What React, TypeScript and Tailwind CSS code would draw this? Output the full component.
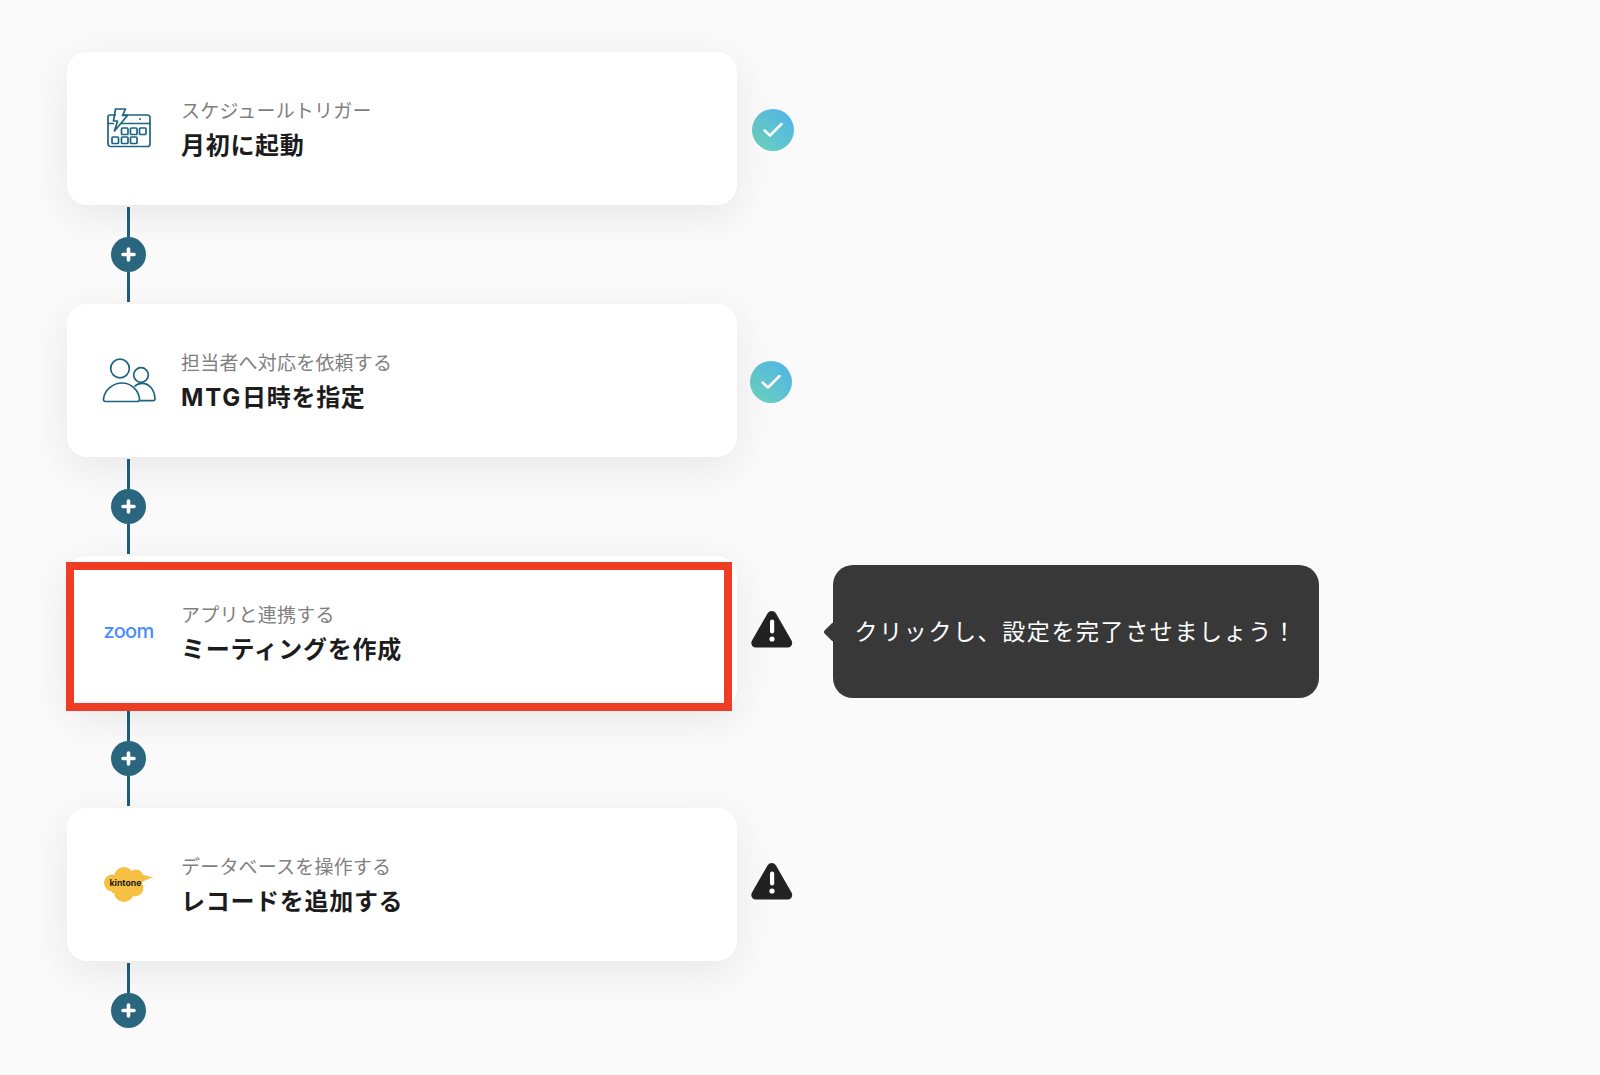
const font = "font-['Inter','Noto_Sans_CJK_JP',sans-serif]";

function CalendarIcon() {
  return (
    <svg className="mb-[2px]" width="44" height="40" viewBox="0 0 44 40" fill="none" stroke="#1d6482" strokeWidth="1.7" strokeLinejoin="round">
      <path d="M9 7H3a2 2 0 0 0-2 2v27a2.500 2.500 0 0 0 2.500 2.500h37a2.500 2.500 0 0 0 2.500-2.500V9.500a2.500 2.500 0 0 0-2.500-2.500H16.500" />
      <path d="M1 15.500h6M14 15.500h29" />
      <path d="M8.500 1H18.500L15.500 7.500H20.500L7.500 23L10.500 13H6.500Z" />
      <circle cx="33" cy="11" r="1" fill="#1d6482" stroke="none" />
      {[14.5, 23.5, 32.5].map((x) => (
        <rect key={x} x={x} y="20" width="6.5" height="6.5" rx="1" />
      ))}
      {[5, 14.5, 23.5].map((x) => (
        <rect key={x} x={x} y="29" width="6.5" height="6.5" rx="1" />
      ))}
    </svg>
  );
}

function PeopleIcon() {
  return (
    <svg width="54" height="45" viewBox="0 0 54 45" fill="none" stroke="#1d6482" strokeWidth="1.7" strokeLinejoin="round">
      <circle cx="18" cy="10.5" r="9.3" />
      <circle cx="39" cy="17" r="7.3" />
      <path d="M3.500 43.500h31.500c1.800 0 2.700-1 2.500-2.600C36.500 32 29 25 20 25S2.500 32 1.500 40.900c-.2 1.600.5 2.600 2 2.600Z" />
      <path d="M32.500 28.500c2-2 4.500-3.200 7.500-3.200 7 0 12.500 6 13 15.300.1 1.200-.6 2-1.800 2H37.500" />
    </svg>
  );
}

function KintoneIcon() {
  return (
    <svg width="50" height="35" viewBox="0 0 50 35" fill="#f6c143">
      <circle cx="20" cy="10" r="10" />
      <circle cx="32" cy="10" r="7.500" />
      <circle cx="8.500" cy="16" r="8.500" />
      <circle cx="20" cy="25" r="10" />
      <circle cx="31" cy="21" r="8.500" />
      <rect x="8" y="8" width="28" height="18" />
      <path d="M34 6.500Q44 9 50 10.500Q42 11.500 36 17Z" />
      <text x="5.500" y="19" fontFamily="Inter, sans-serif" fontSize="8.700" fontWeight="700" fill="#1a1a1a">
        kintone
      </text>
    </svg>
  );
}

function ZoomLogo() {
  return <span className="mb-[3px] font-['Inter',sans-serif] text-[20px] leading-none font-medium tracking-[-0.7px] text-[#4a8cff]">zoom</span>;
}

function Check() {
  return (
    <div className="flex h-[42px] w-[42px] items-center justify-center rounded-full bg-gradient-to-tr from-[#6fd4b6] to-[#4fb0ea]">
      <svg width="20" height="16" viewBox="0 0 20 16" fill="none" stroke="#fff" strokeWidth="2.5" strokeLinecap="round" strokeLinejoin="round">
        <path d="M1.500 8.500L7 13.500 18.500 2" />
      </svg>
    </div>
  );
}

function Warning() {
  return (
    <svg width="42" height="38" viewBox="0 0 42 38">
      <path
        fill="#222"
        d="M16.500 3.500c2-3.300 6.500-3.300 8.500 0l15.500 27c1.800 3.200-.2 7-4 7H5c-3.800 0-5.800-3.800-4-7Z"
      />
      <rect x="19" y="9.5" width="4.2" height="14" rx="2.1" fill="#fff" />
      <circle cx="21" cy="29" r="2.6" fill="#fff" />
    </svg>
  );
}

function Plus() {
  return (
    <div className="flex h-[35px] w-[35px] shrink-0 items-center justify-center rounded-full bg-[#2b667f]">
      <svg width="15" height="15" viewBox="0 0 15 15" stroke="#fff" strokeWidth="3.6" strokeLinecap="round">
        <path d="M7.500 2v11M2 7.500h11" />
      </svg>
    </div>
  );
}

function Connector({ last }: { last?: boolean }) {
  return (
    <div className="flex h-[99px] w-[123px] flex-col items-center pt-[2px] pb-[2px]">
      <div className="h-[30px] w-[3.5px] bg-[#1c5f7d]" />
      <Plus />
      {!last && <div className="w-[3.5px] flex-1 bg-[#1c5f7d]" />}
    </div>
  );
}

function Card({ icon, sub, title, highlight }: { icon: React.ReactNode; sub: string; title: React.ReactNode; highlight?: boolean }) {
  return (
    <div className="relative flex h-[153px] w-[670px] shrink-0 items-center rounded-[20px] bg-white shadow-[0_10px_40px_rgba(0,0,0,0.08)]">
      <div className="flex w-[115px] shrink-0 items-center justify-center pl-[8px]">{icon}</div>
      <div className="mt-[3px] -ml-[1px] flex flex-col">
        <div className="text-[19px] leading-[28px] tracking-[0.2px] text-[#808080]">{sub}</div>
        <div className="mt-[3px] text-[24px] leading-[34px] font-bold tracking-[0.7px] text-[#1c1c1c]">{title}</div>
      </div>
      {highlight && (
        <div className="absolute top-[6px] left-[-1px] h-[149px] w-[666px] border-[8px] border-[#ee3d24]" />
      )}
    </div>
  );
}

export default function App() {
  return (
    <div className={`min-h-[1075px] bg-[#fafafa] pt-[52px] pl-[67px] ${font}`}>
      <div className="flex items-center">
        <Card icon={<CalendarIcon />} sub="スケジュールトリガー" title="月初に起動" />
        <div className="mt-[2px] ml-[15px]"><Check /></div>
      </div>
      <Connector />
      <div className="flex items-center">
        <Card icon={<PeopleIcon />} sub="担当者へ対応を依頼する" title={<><span className="tracking-[1.8px]">MTG</span>日時を指定</>} />
        <div className="mt-[2px] ml-[13px]"><Check /></div>
      </div>
      <Connector />
      <div className="flex items-center">
        <Card icon={<ZoomLogo />} sub="アプリと連携する" title="ミーティングを作成" highlight />
        <div className="mb-[8px] ml-[14px]"><Warning /></div>
        <div className="relative mb-[2px] ml-[40px] flex h-[133px] w-[486px] items-center justify-center rounded-[20px] bg-[#383838] pt-[1px] text-[23px] tracking-[1.6px] text-white">
          <div className="absolute top-1/2 left-[-7px] h-[14px] w-[14px] -translate-y-1/2 rotate-45 rounded-[2px] bg-[#383838]" />
          クリックし、設定を完了させましょう！
        </div>
      </div>
      <Connector />
      <div className="flex items-center">
        <Card icon={<KintoneIcon />} sub="データベースを操作する" title="レコードを追加する" />
        <div className="mb-[7px] ml-[14px]"><Warning /></div>
      </div>
      <Connector last />
    </div>
  );
}
